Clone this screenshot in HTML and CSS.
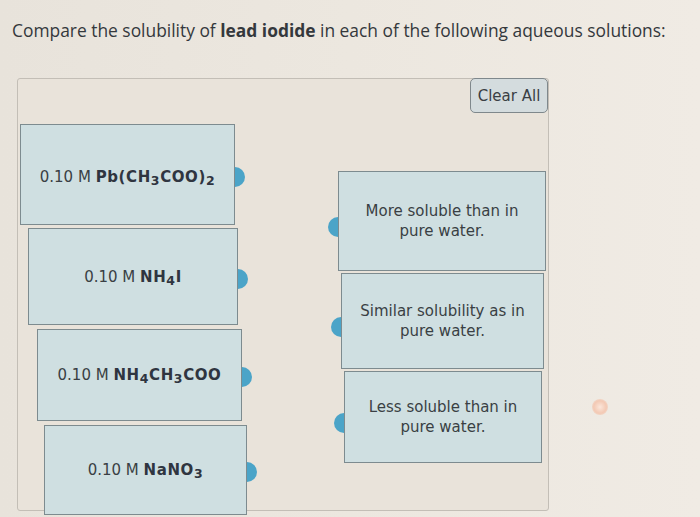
FILE: index.html
```html
<!DOCTYPE html>
<html lang="en">
<head>
    <meta charset="UTF-8">
    <meta name="viewport" content="width=device-width, initial-scale=1.0">
    <title>Solubility Matching</title>
    <link rel="stylesheet" href="styles.css">
</head>
<body>

<h1 class="prompt">Compare the solubility of <b>lead iodide</b> in each of the following aqueous solutions:</h1>

<div class="board">
    <div class="sources">
        <div class="card source">0.10 M&nbsp;<b>Pb(CH<sub>3</sub>COO)<sub>2</sub></b></div>
        <div class="card source">0.10 M&nbsp;<b>NH<sub>4</sub>I</b></div>
        <div class="card source">0.10 M&nbsp;<b>NH<sub>4</sub>CH<sub>3</sub>COO</b></div>
        <div class="card source">0.10 M&nbsp;<b>NaNO<sub>3</sub></b></div>
    </div>

    <div class="targets">
        <button type="button" class="clear-btn">Clear All</button>
        <div class="card target">More soluble than in<br>pure water.</div>
        <div class="card target">Similar solubility as in<br>pure water.</div>
        <div class="card target">Less soluble than in<br>pure water.</div>
    </div>
</div>

<span class="glare"></span>

</body>
</html>
```

FILE: styles.css
```css
body {
    margin: 0;
    height: 517px;
    overflow: hidden;
    position: relative;
    font-family: "DejaVu Sans", Verdana, sans-serif;
    color: #3a3f44;
    background: linear-gradient(90deg, #e8e3db 0%, #ece7df 50%, #f0ebe4 100%);
}

.prompt {
    margin: 0;
    padding: 20px 0 0 12px;
    font-family: "Open Sans", Arial, sans-serif;
    font-size: 17.4px;
    font-weight: normal;
    line-height: 20px;
    color: #34383c;
}

.prompt b {
    font-weight: bold;
}

.board {
    display: flex;
    width: 530px;
    height: 431px;
    margin: 38px 0 0 17px;
    border: 1px solid #c3beb6;
    border-radius: 3px;
    background-color: #e9e3da;
}

.sources {
    width: 320px;
    padding-top: 45px;
    display: flex;
    flex-direction: column;
    gap: 3px;
}

.targets {
    flex: 1;
    display: flex;
    flex-direction: column;
    gap: 2px;
}

.card {
    position: relative;
    flex-shrink: 0;
    box-sizing: border-box;
    display: flex;
    align-items: center;
    justify-content: center;
    text-align: center;
    background-color: #cfdfe1;
    border: 1px solid #7d8b8f;
    font-size: 15px;
    line-height: 20px;
}

.source {
    padding-top: 4px;
}

.card b {
    font-weight: bold;
    letter-spacing: 0.6px;
    color: #2f3540;
}

.card sub {
    font-size: 12.5px;
    line-height: 0;
    vertical-align: -3px;
}

/* blue connector tabs on the card edges */
.card::after {
    content: "";
    position: absolute;
    top: 50%;
    width: 10px;
    height: 20px;
    margin-top: -8px;
    background-color: #4ba4c8;
}

.source::after {
    right: -11px;
    border-radius: 0 10px 10px 0;
}

.target::after {
    left: -11px;
    margin-top: -4px;
    border-radius: 10px 0 0 10px;
}

.source:nth-child(1) { margin-left: 2px; width: 215px; height: 101px; }
.source:nth-child(2) { margin-left: 10px; width: 210px; height: 97px; padding-top: 0; }
.source:nth-child(3) { margin-left: 19px; width: 205px; height: 92px; padding-top: 0; margin-top: 1px; }
.source:nth-child(4) { margin-left: 26px; width: 203px; height: 90px; padding-top: 0; margin-top: 1px; }

.target:nth-of-type(1) { margin-left: 0; width: 208px; height: 100px; }
.target:nth-of-type(2) { margin-left: 3px; width: 203px; height: 96px; }
.target:nth-of-type(3) { margin-left: 6px; width: 198px; height: 92px; }

.clear-btn {
    align-self: flex-end;
    margin: -1px 0 56px 0;
    width: 78px;
    height: 35px;
    padding: 0;
    font-family: "DejaVu Sans", Verdana, sans-serif;
    font-size: 15px;
    color: #3a3f44;
    background-color: #d4dcde;
    border: 1px solid #7f888c;
    border-radius: 5px;
}

.glare {
    position: absolute;
    left: 592px;
    top: 399px;
    width: 16px;
    height: 16px;
    border-radius: 50%;
    background: radial-gradient(circle, #fbe6da 0%, #f3c9b4 55%, rgba(240, 200, 180, 0) 100%);
}
```
